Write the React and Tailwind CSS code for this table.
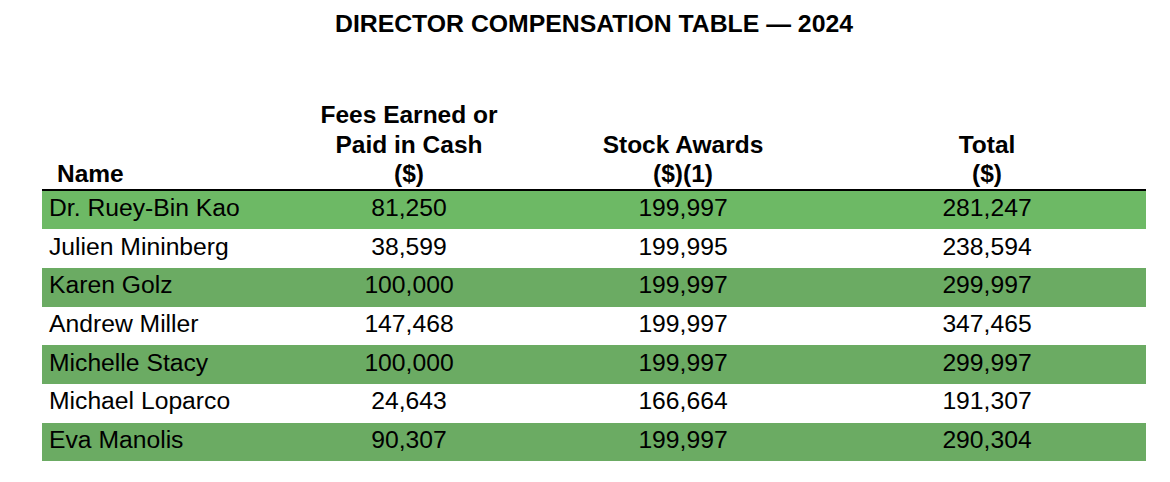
const rows = [
  { name: "Dr. Ruey-Bin Kao", fees: "81,250", stock: "199,997", total: "281,247" },
  { name: "Julien Mininberg", fees: "38,599", stock: "199,995", total: "238,594" },
  { name: "Karen Golz", fees: "100,000", stock: "199,997", total: "299,997" },
  { name: "Andrew Miller", fees: "147,468", stock: "199,997", total: "347,465" },
  { name: "Michelle Stacy", fees: "100,000", stock: "199,997", total: "299,997" },
  { name: "Michael Loparco", fees: "24,643", stock: "166,664", total: "191,307" },
  { name: "Eva Manolis", fees: "90,307", stock: "199,997", total: "290,304" },
];

const cols = "grid grid-cols-[238px_258px_290px_1fr]";

export default function App() {
  return (
    <div className="w-[1170px] h-[482px] bg-white px-[42px] pt-[10px] text-black font-['Liberation_Sans',Arial,sans-serif] overflow-hidden">
      <div className="w-[1104px]">
        <h1 className="text-center text-[24.8px] leading-[28px] font-bold">
          DIRECTOR COMPENSATION TABLE — 2024
        </h1>

        <div className={`${cols} mt-[62px] items-end border-b-2 border-black text-[24.5px] leading-[29.5px] font-bold`}>
          <div className="pl-[15px]">Name</div>
          <div className="text-center">
            Fees Earned or
            <br />
            Paid in Cash
            <br />
            ($)
          </div>
          <div className="text-center">
            Stock Awards
            <br />
            ($)(1)
          </div>
          <div className="text-center">
            Total
            <br />
            ($)
          </div>
        </div>

        <div className="text-[24.7px] leading-none">
          {rows.map((r, i) => (
            <div
              key={r.name}
              className={`${cols} h-[38.7px] items-center pb-[3px] ${
                i === 0 ? "bg-[#6db965]" : i % 2 === 0 ? "bg-[#6bab63]" : "bg-white"
              }`}
            >
              <div className="pl-[7px]">{r.name}</div>
              <div className="text-center">{r.fees}</div>
              <div className="text-center">{r.stock}</div>
              <div className="text-center">{r.total}</div>
            </div>
          ))}
        </div>
      </div>
    </div>
  );
}
